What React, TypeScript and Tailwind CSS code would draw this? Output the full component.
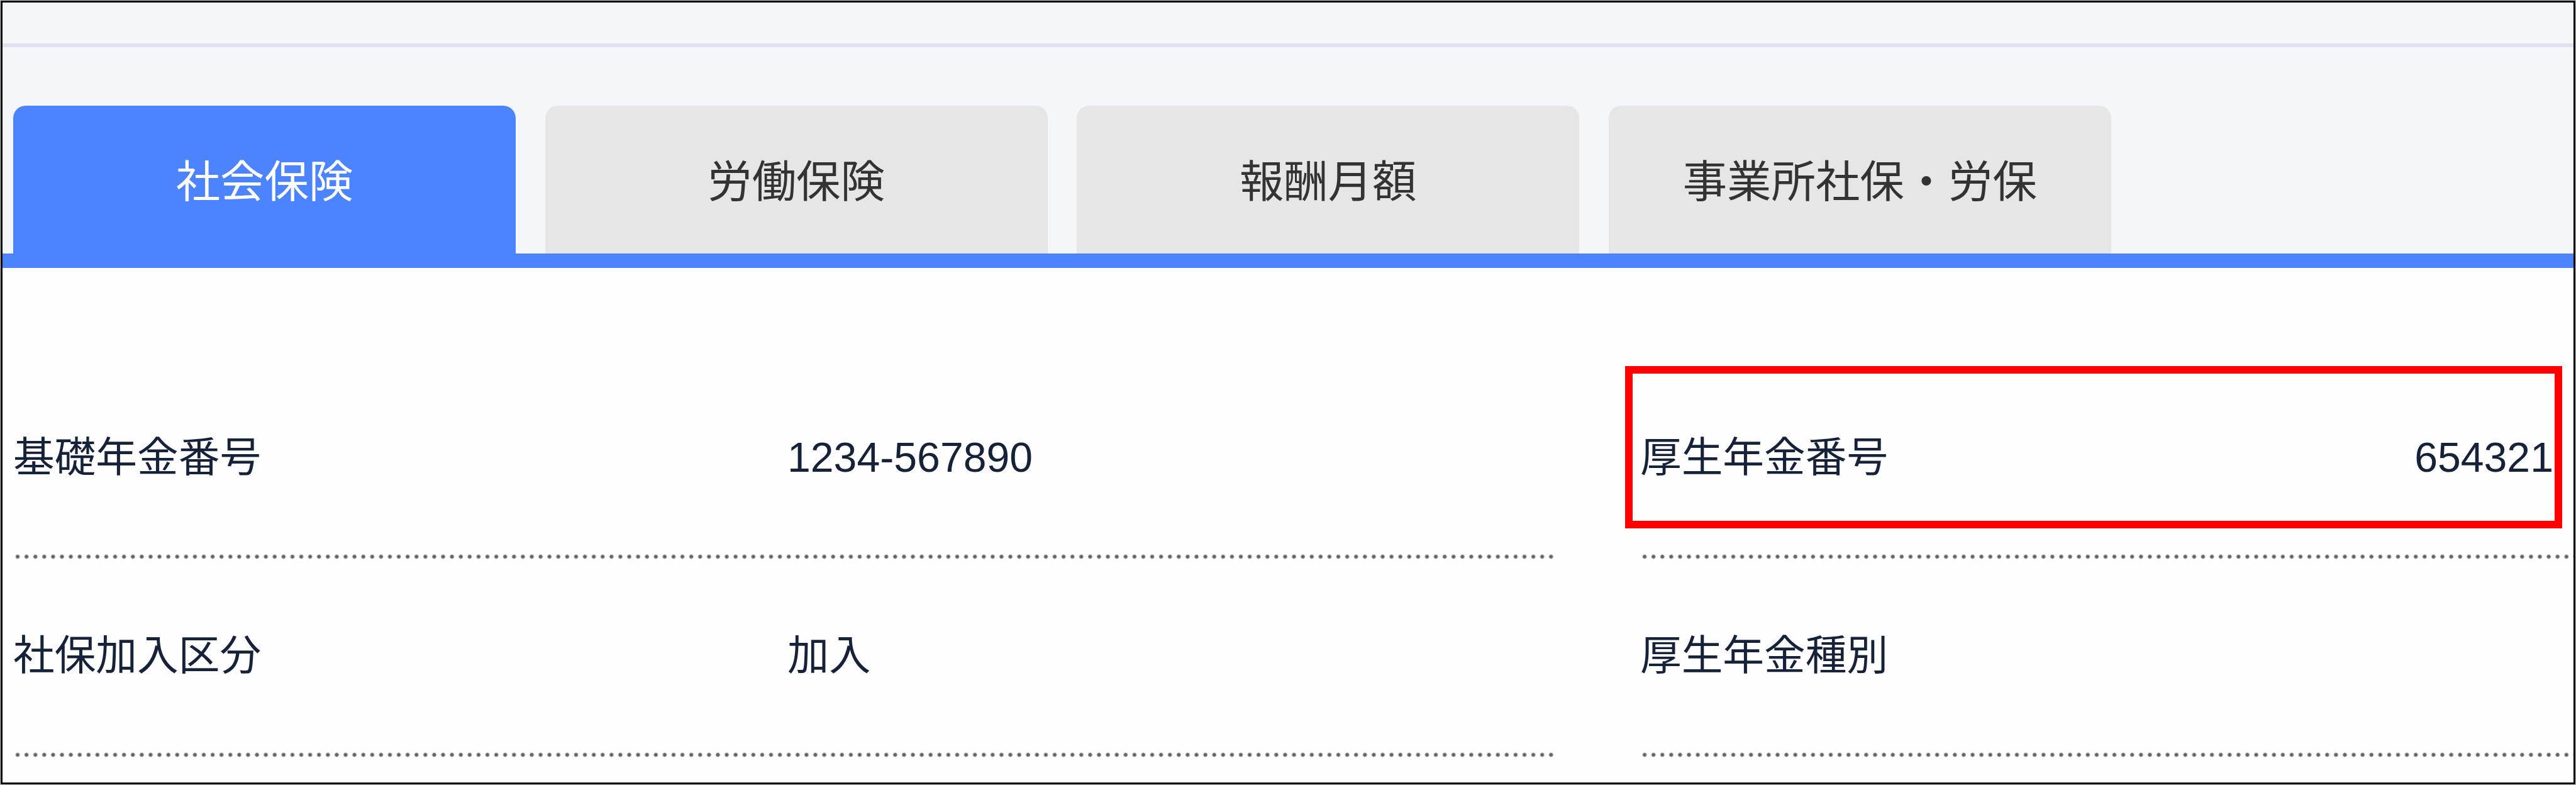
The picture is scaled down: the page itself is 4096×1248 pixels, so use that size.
type Field = {
  label: string;
  value?: string;
};

const tabs = ['社会保険', '労働保険', '報酬月額', '事業所社保・労保'];

const leftFields: Field[] = [
  { label: '基礎年金番号', value: '1234-567890' },
  { label: '社保加入区分', value: '加入' },
];

const rightFields: Field[] = [
  { label: '厚生年金番号', value: '654321' },
  { label: '厚生年金種別' },
];

const DottedLine = () => (
  <div className="h-[10px] bg-[radial-gradient(circle_at_center,#5c5c5c_0,#666_2.1px,transparent_4.1px)] bg-[length:14.1px_10px] bg-repeat-x" />
);

const FieldRow = ({ label, value, alignRight }: Field & { alignRight?: boolean }) => (
  <div className="flex h-[315px] flex-col justify-between">
    <div className="flex h-[305px] items-center">
      <span className="w-[1231px] shrink-0 pt-px">{label}</span>
      {value && <span className={alignRight ? 'ml-auto pr-[32px] text-[66.2px]' : 'text-[66.2px]'}>{value}</span>}
    </div>
    <DottedLine />
  </div>
);

const App = () => {
  return (
    <div className="h-[1248px] w-[4096px] overflow-hidden bg-[#d0d0d0] p-px font-['Liberation_Sans','Noto_Sans_CJK_JP',sans-serif]">
      <div className="relative flex h-full flex-col overflow-hidden border-[3px] border-black bg-[#fefefe]">
        <header className="h-[71px] shrink-0 border-b-[6px] border-[#e0e2ee] bg-[#f5f6fa]" />

        <nav className="flex h-[351px] shrink-0 items-end gap-[46.6px] border-b-[23px] border-[#4c84ff] bg-[#f5f6fa] pl-[17px]">
          {tabs.map((tab, i) => (
            <button
              key={tab}
              className={`flex h-[235px] w-[799px] items-center justify-center rounded-t-[20px] pt-[9px] text-[70.4px] leading-none ${
                i === 0 ? 'bg-[#4c84ff] text-white' : 'bg-[#e6e6e6] text-[#333]'
              }`}
            >
              {tab}
            </button>
          ))}
        </nav>

        <main className="flex pt-[149px] text-[65.7px] leading-none text-[#16213a]">
          <section className="ml-[17px] w-[2454px]">
            {leftFields.map((field) => (
              <FieldRow key={field.label} {...field} />
            ))}
          </section>
          <section className="ml-[133px] grow">
            {rightFields.map((field) => (
              <FieldRow key={field.label} {...field} alignRight />
            ))}
          </section>
        </main>

        {/* highlight around the pension number */}
        <div className="absolute left-[2580px] top-[578px] h-[258px] w-[1490px] border-[12px] border-[#ff0000]" />
      </div>
    </div>
  );
};

export default App;
